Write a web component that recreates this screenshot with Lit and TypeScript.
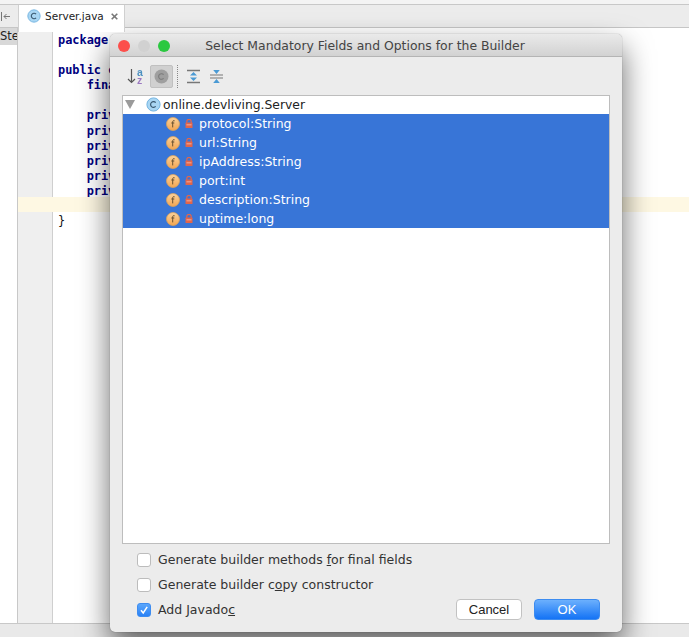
import { LitElement, html, css } from "lit";
import { customElement } from "lit/decorators.js";

const fields = ["protocol:String", "url:String", "ipAddress:String", "port:int", "description:String", "uptime:long"];
const code = [
  ["package", 1], ["", 0], ["public c", 1], ["    final", 1], ["", 0],
  ["    priv", 1], ["    priv", 1], ["    priv", 1], ["    priv", 1], ["    priv", 1], ["    priv", 1],
  ["", 0], ["}", 0],
] as const;

const classIcon = (size = 15) => html`<svg class="ic" width=${size} height=${size} viewBox="0 0 15 15">
  <circle cx="7.5" cy="7.5" r="6.6" fill="#a9d6f3" stroke="#72b3e0" stroke-width="1"/>
  <path d="M9.7 5.6 A2.9 2.9 0 1 0 9.7 9.4" fill="none" stroke="#3b5a72" stroke-width="1.2"/>
</svg>`;

const fieldIcon = html`<svg class="ic" width="14" height="14" viewBox="0 0 14 14">
  <defs><linearGradient id="fg" x1="0" y1="0" x2="0" y2="1"><stop offset="0" stop-color="#fbd29a"/><stop offset="1" stop-color="#f3a652"/></linearGradient></defs>
  <circle cx="7" cy="7" r="6.5" fill="url(#fg)" stroke="#d9a25e" stroke-width=".8"/>
  <path d="M8.6 3.8 C7.4 3.3 6.7 3.8 6.7 5 V10.4 M5.3 6 H8.3" fill="none" stroke="#6b5230" stroke-width="1"/>
</svg>`;

const lockIcon = html`<svg class="ic" width="8" height="9" viewBox="0 0 8 9">
  <path d="M1.8 4 V2.6 A2.2 2.2 0 0 1 6.2 2.6 V4" fill="none" stroke="#e2654a" stroke-width="1.2"/>
  <rect x=".5" y="3.6" width="7" height="5.4" rx=".6" fill="#e2654a"/>
  <rect x="1.5" y="5.4" width="5" height=".9" fill="#f3b5a5"/>
</svg>`;

@customElement("app-root")
export class AppRoot extends LitElement {
  static styles = css`
    :host { display: block; width: 689px; height: 637px; position: relative; overflow: hidden; background: #fff; font-family: "DejaVu Sans", sans-serif; }
    .ide { display: flex; flex-direction: column; height: 637px; }
    .topgap { height: 4px; background: #f4f4f4; border-bottom: 1px solid #c8c8c8; }
    .tabs { height: 22px; background: #ececec; border-bottom: 1px solid #c6c6c6; display: flex; }
    .hide { width: 17px; display: flex; align-items: center; }
    .hide svg { display: block; }
    .tab { width: 107px; height: 27px; margin-left: 1px; background: #fff; border-left: 1px solid #d0d0d0; border-right: 1px solid #d0d0d0; box-sizing: border-box; display: flex; align-items: center; padding: 0 0 5px 8px; gap: 4px; font-size: 10.5px; color: #222; position: relative; z-index: 1; }
    .x { margin-left: 3px; display: block; }
    .main { flex: 1; display: flex; min-height: 0; }
    .side { width: 17px; border-right: 1px solid #c8c8c8; overflow: hidden; }
    .side div { height: 17px; background: #d8d8d8; font-size: 11.5px; line-height: 16px; color: #222; white-space: nowrap; }
    .gutter { width: 34px; background: #efefef; border-right: 1px solid #cfcfcf; }
    .editor { flex: 1; padding-top: 5px; }
    .ln { height: 15.1px; font: 11.9px/15px "DejaVu Sans Mono", monospace; white-space: pre; color: #111; padding-left: 5px; }
    .ln.kw { color: #000080; font-weight: 700; }
    .hl { position: absolute; left: 18px; top: 197px; width: 671px; height: 15px; background: #fef8e3; }
    .status { height: 13px; background: #e9e9e9; border-top: 1px solid #c8c8c8; }

    .dialog { position: absolute; left: 110px; top: 34px; width: 512px; height: 598px; box-sizing: border-box; border-radius: 5px; background: #ececec; box-shadow: 0 14px 30px rgba(0,0,0,.6), 0 0 1px rgba(0,0,0,.5); display: flex; flex-direction: column; overflow: hidden; }
    .title { height: 22px; flex: none; display: flex; align-items: center; justify-content: center; background: linear-gradient(#eaeaea, #d2d2d2); border-bottom: 1px solid #b4b4b4; position: relative; font-size: 12.4px; color: #444; white-space: nowrap; padding-right: 2px; }
    .lights { position: absolute; left: 8px; top: 6px; display: flex; gap: 8px; }
    .lights i { width: 12px; height: 12px; border-radius: 50%; display: block; }
    .r { background: #fc4f4b; } .g { background: #d1d1d1; } .v { background: #2bc840; }
    .toolbar { height: 38px; flex: none; display: flex; align-items: center; padding-left: 17px; }
    .tb { width: 23px; height: 23px; display: flex; align-items: center; justify-content: center; box-sizing: border-box; }
    .tb.on { background: #d0d0d0; border: 1px solid #c0c0c0; border-radius: 2px; }
    .sort { gap: 1px; justify-content: flex-start; padding-left: 0; }
    .az { width: 7px; word-break: break-all; font: 700 10.5px/8.5px "Liberation Sans", sans-serif; background: linear-gradient(#4a8fc0 50%, #9a78c0 50%); -webkit-background-clip: text; background-clip: text; color: transparent; }
    .sep { width: 0; height: 23px; border-left: 1px dotted #888; margin: 0 4px; }
    .tree { margin: 0 12px; height: 449px; flex: none; box-sizing: border-box; background: #fff; border: 1px solid #bdbdbd; }
    .root { height: 18px; box-sizing: border-box; padding: 0 0 1px 2px; display: flex; align-items: center; font-size: 12.35px; color: #222; }
    .tri { width: 0; height: 0; border-left: 5.5px solid transparent; border-right: 5.5px solid transparent; border-top: 9px solid #9a9a9a; margin-right: 11px; }
    .root .ic { margin-right: 2px; }
    .row { height: 19px; background: #3875d7; color: #fff; display: flex; align-items: center; padding-left: 43px; font-size: 12.5px; }
    .row .lk { margin-left: 5px; margin-right: 6px; }
    .ic { display: block; flex: none; }
    .opts { flex: 1; position: relative; padding: 6px 0 0 27px; display: flex; flex-direction: column; gap: 6px; }
    .opt { height: 19px; display: flex; align-items: center; font-size: 12.5px; color: #333; gap: 7px; }
    .cb { width: 14px; height: 14px; box-sizing: border-box; background: #fff; border: 1px solid #bcbcbc; border-radius: 3px; display: flex; align-items: center; justify-content: center; }
    .cb.on { background: linear-gradient(#5aa6fb, #2a82f6); border-color: #3d8cf0; }
    u { text-underline-offset: 1px; }
    .btns { position: absolute; right: 22px; bottom: 12px; display: flex; gap: 12px; }
    .btn { width: 66px; height: 21px; box-sizing: border-box; border-radius: 4px; font: 13px/19px "Liberation Sans", sans-serif; text-align: center; }
    .cancel { background: #fff; border: 1px solid #c2c2c2; color: #222; }
    .ok { background: linear-gradient(#6cb0fd, #1473f5); border: 1px solid #3d8cf0; color: #fff; }
  `;

  render() {
    return html`
      <div class="ide">
        <div class="topgap"></div>
        <div class="tabs">
          <div class="hide"><svg width="11" height="9" viewBox="0 0 11 9"><path d="M1.5 0V9M10 4.5H4M6.5 2 4 4.5 6.5 7" fill="none" stroke="#777" stroke-width="1"/></svg></div>
          <div class="tab">${classIcon(14)}<span>Server.java</span>
            <svg class="x" width="7" height="7" viewBox="0 0 7 7"><path d="M.7.7 6.3 6.3M6.3.7.7 6.3" stroke="#777" stroke-width="1.6"/></svg>
          </div>
        </div>
        <div class="main">
          <div class="side"><div>Ste</div></div>
          <div class="gutter"></div>
          <div class="editor">
            ${code.map(([t, k]) => html`<div class="ln ${k ? "kw" : ""}">${t}</div>`)}
          </div>
        </div>
        <div class="status"></div>
      </div>
      <div class="hl"></div>
      <div class="dialog">
        <div class="title">
          <div class="lights"><i class="r"></i><i class="g"></i><i class="v"></i></div>
          Select Mandatory Fields and Options for the Builder
        </div>
        <div class="toolbar">
          <div class="tb sort">
            <svg width="9" height="16" viewBox="0 0 9 16"><path d="M4.5 1V14.5M1 11 4.5 14.5 8 11" fill="none" stroke="#555" stroke-width="1.2"/></svg>
            <span class="az">az</span>
          </div>
          <div class="tb on">
            <svg width="15" height="15" viewBox="0 0 15 15"><circle cx="7.5" cy="7.5" r="7" fill="#9f9f9f"/><path d="M9.6 5.7A2.8 2.8 0 1 0 9.6 9.3" fill="none" stroke="#7b7b7b" stroke-width="1.1"/></svg>
          </div>
          <div class="sep"></div>
          <div class="tb">
            <svg width="15" height="15" viewBox="0 0 15 15">
              <path d="M1 1.5H14M1 13.5H14" stroke="#777" stroke-width="1.4"/>
              <path d="M7.5 3 11 6.6H4ZM7.5 12 4 8.4H11Z" fill="#4a9ad4"/>
            </svg>
          </div>
          <div class="tb">
            <svg width="15" height="15" viewBox="0 0 15 15">
              <path d="M1 6H14M1 9H14" stroke="#777" stroke-width="1.2"/>
              <path d="M7.5 5 4.2 1H10.8ZM7.5 10 10.8 14H4.2Z" fill="#4a9ad4"/>
            </svg>
          </div>
        </div>
        <div class="tree">
          <div class="root"><span class="tri"></span>${classIcon(15)}<span>online.devliving.Server</span></div>
          ${fields.map((f) => html`<div class="row">${fieldIcon}<span class="lk">${lockIcon}</span><span>${f}</span></div>`)}
        </div>
        <div class="opts">
          <div class="opt"><span class="cb"></span><span>Generate builder methods <u>f</u>or final fields</span></div>
          <div class="opt"><span class="cb"></span><span>Generate builder c<u>o</u>py constructor</span></div>
          <div class="opt"><span class="cb on"><svg width="10" height="10" viewBox="0 0 10 10"><path d="M2 5.2 4.2 8 8.2 1.8" fill="none" stroke="#fff" stroke-width="1.5"/></svg></span><span>Add Javado<u>c</u></span></div>
          <div class="btns"><div class="btn cancel">Cancel</div><div class="btn ok">OK</div></div>
        </div>
      </div>
    `;
  }
}
